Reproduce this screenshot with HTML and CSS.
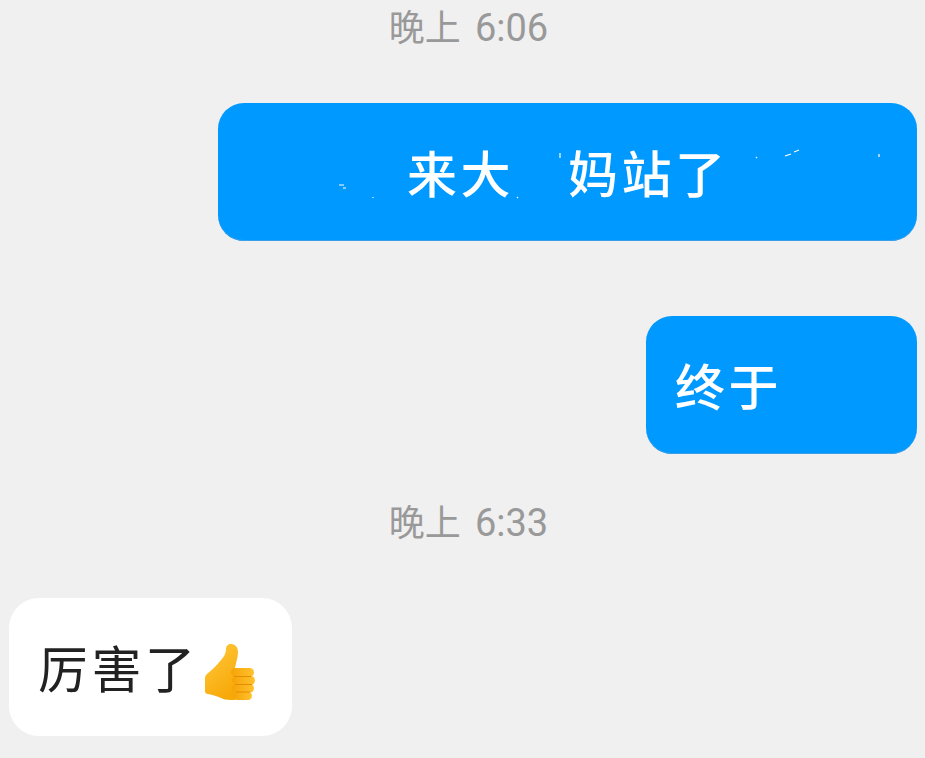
FILE: index.html
```html
<!DOCTYPE html>
<html lang="zh-CN">
<head>
  <meta charset="UTF-8">
  <meta name="viewport" content="width=device-width, initial-scale=1.0">
  <title>聊天记录</title>
  <link rel="stylesheet" href="styles.css">
</head>
<body>
  <div class="chat">
    <p class="time">晚上 <span class="clock">6:06</span></p>
    <div class="msg msg-out">
      <div class="bubble bubble-blue bubble-wide">
        <span class="text">来大<span class="gap"></span>妈站了</span>
        <!-- 抹掉文字后留下的白点 -->
        <svg class="specks" width="699" height="138" viewBox="0 0 699 138">
          <path d="M121 82h5M125 85h3M155 94v1M299 94l1 1M342 50v5M538 55l1-1M567 53l6-2M576 49l5-2M661 51v3" stroke="#fff" stroke-width="1.2" fill="none"/>
        </svg>
      </div>
    </div>
    <div class="msg msg-out msg-next">
      <div class="bubble bubble-blue bubble-short">
        <span class="text">终于</span>
      </div>
    </div>
    <p class="time time-later">晚上 <span class="clock">6:33</span></p>
    <div class="msg msg-in">
      <div class="bubble bubble-white">
        <span class="text">厉害了</span>
        <svg class="thumb" width="50" height="56" viewBox="0 0 50 56">
          <defs>
            <linearGradient id="hand" x1="0" y1="0" x2="0.5" y2="1">
              <stop offset="0" stop-color="#ffcb3d"/>
              <stop offset="1" stop-color="#f8a90a"/>
            </linearGradient>
            <linearGradient id="finger" x1="0" y1="0" x2="1" y2="0">
              <stop offset="0" stop-color="#f6a306"/>
              <stop offset="1" stop-color="#ffc22e"/>
            </linearGradient>
          </defs>
          <path d="M26 0c-3 0-5 2-5 5 0 4-2 8-5 11-4 5-9 10-14 14-1 1-2 2-2 4v13c0 2 1 3 3 3 5 1 9 2 13 4 4 2 8 2 14 2V24c1-6 3-11 3-16 0-5-3-8-7-8z" fill="url(#hand)"/>
          <rect x="26" y="24" width="23" height="9" rx="4.5" fill="url(#finger)"/>
          <rect x="27" y="32" width="23" height="9" rx="4.5" fill="url(#finger)"/>
          <rect x="27" y="40" width="22" height="8.500" rx="4.250" fill="url(#finger)"/>
          <rect x="28" y="47.500" width="19" height="8.500" rx="4.250" fill="url(#finger)"/>
          <path d="M29 32.500h17M30 40.500h17M31 48h14" stroke="#e58c02" stroke-width="1" fill="none"/>
        </svg>
      </div>
    </div>
  </div>
</body>
</html>
```

FILE: styles.css
```css
body {
  margin: 0;
  background-color: #f0f0f0;
  font-family: "Noto Sans CJK SC", "Noto Sans", sans-serif;
}
.chat {
  display: flex;
  flex-direction: column;
  height: 758px;
  padding: 0 8px 0 9px;
  box-sizing: border-box;
  overflow: hidden;
}
.time {
  margin: 0;
  padding-left: 11px;
  height: 54px;
  line-height: 50px;
  text-align: center;
  font-size: 36px;
  color: #999;
}
.clock {
  margin-left: 6px;
  font-family: Roboto, sans-serif;
  font-size: 38px;
}
.time-later {
  margin-top: 41px;
}
.msg {
  display: flex;
  margin-top: 49px;
}
.msg-out {
  justify-content: flex-end;
}
.msg-next {
  margin-top: 75px;
}
.msg-in {
  justify-content: flex-start;
}
.bubble {
  position: relative;
  display: flex;
  align-items: center;
  height: 138px;
  box-sizing: border-box;
  border-radius: 26px;
  font-size: 50px;
  letter-spacing: 3.500px;
}
.bubble-blue {
  background-color: #0099ff;
  box-shadow: inset 0 -1px 0 #3a9fe8;
  color: #fff;
  font-weight: 500;
}
.bubble-white {
  background-color: #fff;
  color: #222;
  width: 283px;
  padding-left: 29px;
  border-radius: 30px;
}
.bubble-wide {
  width: 699px;
  padding-left: 189px;
}
.bubble-short {
  width: 271px;
  padding-left: 29px;
}
.text {
  display: block;
  margin-top: -3px;
  line-height: 1;
}
.gap {
  display: inline-block;
  width: 54px;
}
.specks {
  position: absolute;
  top: 0;
  left: 0;
}
.thumb {
  margin-left: 6px;
  margin-top: 10px;
}
```
